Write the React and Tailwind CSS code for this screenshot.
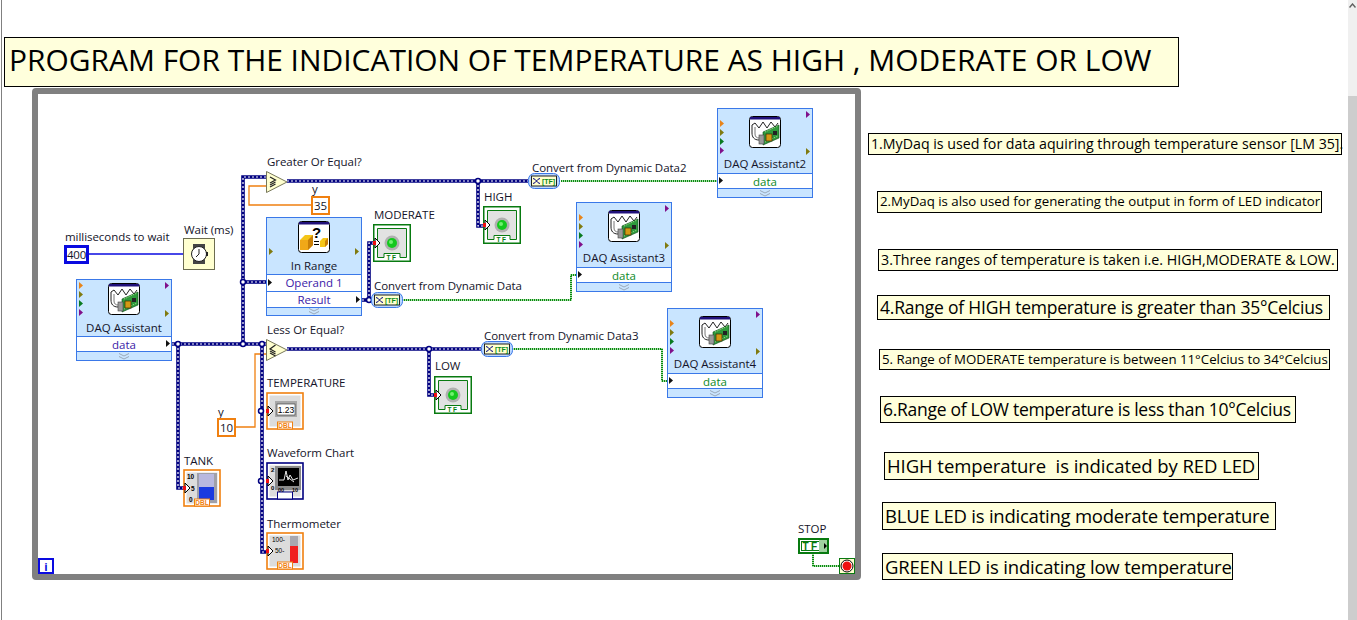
import React from "react";

const label = "absolute whitespace-nowrap text-[11.5px] tracking-[-0.05px] leading-[14px] text-[#14142a]";

function Tri({ color, className }) {
  return (
    <svg viewBox="0 0 4 7" className={`absolute w-[4px] h-[7px] ${className}`}>
      <path d="M0 0 L4 3.5 L0 7 Z" fill={color} />
    </svg>
  );
}

function Expand() {
  return (
    <svg viewBox="0 0 12 7" className="w-[12px] h-[7px]">
      <path d="M1 0.5 L6 3 L11 0.5 M1 3.5 L6 6 L11 3.5" fill="none" stroke="#9aa8b8" strokeWidth="1" />
    </svg>
  );
}

function DaqIcon() {
  return (
    <svg viewBox="0 0 32 32" className="w-8 h-8 shrink-0">
      <rect x="0.5" y="0.5" width="31" height="31" rx="3" fill="#fff" stroke="#000" />
      <rect x="1" y="1" width="30" height="2.5" fill="#20107a" />
      <path d="M10 24 C5 24 3 21 3 17 L3 9 L6 7 L10 12 L14 6 L18 12 L22 6 L26 11 L29 7" fill="none" stroke="#222" />
      <path d="M6 11 L6 18 C6 21 8 22 10 22" fill="none" stroke="#777" />
      <path d="M14 16 L30 9 L30 22 L14 29 Z" fill="#2f9a3c" stroke="#0b4a14" strokeWidth="0.6" />
      <path d="M16 16 L29 10 M16 26 L29 20" stroke="#9fe08a" strokeWidth="1" strokeDasharray="1 1" />
      <rect x="17" y="18" width="6" height="7" fill="#d49a14" stroke="#3a2a00" strokeWidth="0.7" />
      <rect x="24" y="15" width="4" height="4" fill="#222" />
      <rect x="10" y="19" width="5" height="9" fill="#9a9a9a" stroke="#444" strokeWidth="0.6" />
    </svg>
  );
}

function RangeIcon() {
  return (
    <svg viewBox="0 0 32 32" className="w-8 h-8 shrink-0">
      <rect x="0.5" y="0.5" width="31" height="31" rx="3" fill="#fff" stroke="#000" />
      <rect x="1" y="1" width="30" height="2.5" fill="#20107a" />
      <text x="14" y="17" fontSize="15" fontWeight="700" fill="#000" fontFamily="Liberation Sans, sans-serif">?</text>
      <path d="M16 20.5 H21 M16 23.5 H21" stroke="#000" />
      <path d="M2 19 L7 14 L15 14 L15 24 L10 29 L2 29 Z" fill="#f5c518" />
      <path d="M10 19 L15 14 L15 24 L10 29 Z" fill="#c97f08" />
      <path d="M2 19 L10 19 L10 29 L2 29 Z" fill="#f0a818" />
      <path d="M22 20 L25 17 L30 17 L30 23 L27 26 L22 26 Z" fill="#f5c518" />
      <path d="M27 20 L30 17 L30 23 L27 26 Z" fill="#c97f08" />
    </svg>
  );
}

function Daq({ name, dataColor, compact, inputLeft, className }) {
  return (
    <div className={`absolute w-[96px] flex flex-col border border-[#3a78e8] bg-[#c9e5ff] ${className}`}>
      <div className={`flex flex-col items-center ${compact ? "h-[56px] pt-[3px] gap-[5px]" : "h-[64px] pt-[7px] gap-[8px]"}`}>
        <DaqIcon />
        <span className="text-[11.5px] leading-[15px] text-[#14142a] whitespace-nowrap">{name}</span>
      </div>
      {compact ? (
        <>
          <Tri color="#e8841a" className="left-[2px] top-[2px]" />
          <Tri color="#807a10" className="left-[2px] top-[11px]" />
          <Tri color="#0a7a20" className="left-[2px] top-[20px]" />
          <Tri color="#80108a" className="left-[2px] top-[29px]" />
          <Tri color="#80108a" className="right-[2px] top-[2px]" />
          <Tri color="#807a10" className="right-[2px] top-[30px]" />
        </>
      ) : (
        <>
          <Tri color="#e8841a" className="left-[2px] top-[11px]" />
          <Tri color="#807a10" className="left-[2px] top-[20px]" />
          <Tri color="#0a7a20" className="left-[2px] top-[29px]" />
          <Tri color="#80108a" className="left-[2px] top-[38px]" />
          <Tri color="#80108a" className="right-[2px] top-[2px]" />
          <Tri color="#807a10" className="right-[2px] top-[39px]" />
        </>
      )}
      <div className={`relative h-[16px] border-y border-[#3a78e8] bg-white text-center text-[11.5px] leading-[15px] ${dataColor}`}>
        data
        <Tri color="#111" className={inputLeft ? "left-[1px] top-[3px]" : "right-[1px] top-[3px]"} />
      </div>
      <div className="h-[8px] flex items-center justify-center">
        <Expand />
      </div>
    </div>
  );
}

function InRange() {
  return (
    <div className="absolute left-[228px] top-[123px] w-[96px] h-[99px] flex flex-col border border-[#3a78e8] bg-[#c9e5ff]">
      <div className="h-[56px] pt-[3px] gap-[5px] flex flex-col items-center">
        <RangeIcon />
        <span className="text-[11.5px] leading-[15px] text-[#14142a]">In Range</span>
      </div>
      <Tri color="#807a10" className="left-[2px] top-[30px]" />
      <Tri color="#807a10" className="right-[2px] top-[30px]" />
      <div className="relative h-[18px] border-y border-[#3a78e8] bg-white text-center text-[11.5px] leading-[16px] text-[#3b1aa8]">
        Operand 1
        <Tri color="#111" className="left-[1px] top-[4px]" />
      </div>
      <div className="relative h-[16px] border-b border-[#3a78e8] bg-white text-center text-[11.5px] leading-[15px] text-[#3b1aa8]">
        Result
        <Tri color="#111" className="right-[1px] top-[4px]" />
      </div>
      <div className="flex-1 flex items-center justify-center">
        <Expand />
      </div>
    </div>
  );
}

function Compare({ less, className }) {
  return (
    <svg viewBox="0 0 22 22" className={`absolute w-[22px] h-[22px] ${className}`}>
      <path d="M0.5 0.5 L21 11 L0.5 21.5 Z" fill="#ffffcf" stroke="#77775a" />
      {less ? (
        <path d="M9.5 6 L4 10 L9.5 13 M4 12 L9.5 15 M4 14 L9.5 17" fill="none" stroke="#222" strokeWidth="1.2" />
      ) : (
        <path d="M4 6 L9.5 9 L4 12 M9.5 11 L4 14 M9.5 13 L4 16" fill="none" stroke="#222" strokeWidth="1.2" />
      )}
    </svg>
  );
}

function Arrow({ y }) {
  return (
    <g>
      <path d={`M2 ${y - 5} L7 ${y} L2 ${y + 5} Z`} fill="#fff" stroke="#000" strokeWidth="1" />
      <rect x="0" y={y - 2} width="3" height="4" fill="#f01010" />
    </g>
  );
}

function Led({ className }) {
  return (
    <svg viewBox="0 0 38 38" className={`absolute w-[38px] h-[38px] ${className}`}>
      <rect x="0.75" y="0.75" width="36.5" height="36.5" fill="#fff" stroke="#087a10" strokeWidth="1.5" />
      <path d="M4.5 33.5 V4.5 H33.5 V33.5 H27 V29.5 H11 V33.5 Z" fill="#e2e2e2" stroke="#087a10" />
      <circle cx="19" cy="19" r="7.5" fill="#b0b0b0" />
      <circle cx="19" cy="19" r="5" fill="#14c81e" />
      <circle cx="18" cy="18" r="2" fill="#70f070" />
      <text x="19" y="35.5" textAnchor="middle" fontSize="6.5" fontWeight="700" letterSpacing="1.5" fill="#087a10" fontFamily="Liberation Sans, sans-serif">TF</text>
      <Arrow y={19} />
    </svg>
  );
}

function Frame({ color, tab, children, className }) {
  return (
    <svg viewBox="0 0 38 38" className={`absolute w-[38px] h-[38px] ${className}`}>
      <rect x="1" y="1" width="36" height="36" fill="#fff" stroke={color} strokeWidth="1.6" />
      <path d="M3.5 3.5 H34.5 V34.5 H27 V30 H11 V34.5 H3.5 Z" fill="#dcdcdc" />
      {children}
      <rect x="11.5" y="30" width="15" height="7" fill="#fff" stroke={color} />
      <text x="19" y="36" textAnchor="middle" fontSize="6.5" fontWeight="700" fill={color} fontFamily="Liberation Sans, sans-serif">{tab}</text>
      <Arrow y={19} />
    </svg>
  );
}

function Conv({ className }) {
  return (
    <svg viewBox="0 0 32 16" className={`absolute w-[32px] h-[16px] ${className}`}>
      <rect x="0.5" y="0.5" width="31" height="15" rx="6" fill="#bcd8ff" stroke="#3a78e8" />
      <rect x="3.5" y="3" width="25" height="10" fill="#ffffcf" stroke="#222" />
      <path d="M5 5.5 C8 5.5 9 10.5 12 10.5 M5 10.5 C8 10.5 9 5.5 12 5.5" fill="none" stroke="#000080" strokeWidth="1" />
      <text x="20.5" y="11" textAnchor="middle" fontSize="7" fontWeight="700" fill="#0a8a1a" fontFamily="Liberation Sans, sans-serif">[TF]</text>
    </svg>
  );
}

const dynamicWires = [
  "M172 344 H266",
  "M178 344 V488 H183",
  "M243 344 V177 H266",
  "M243 282 H266",
  "M262 344 V552 H267",
  "M287 181 H528",
  "M478 181 V226 H484",
  "M362 300 H371",
  "M369 300 V243 H374",
  "M287 349 H481",
  "M429 349 V395 H435",
];
const dots = [
  [178, 344], [243, 344], [243, 282], [262, 344], [478, 181], [369, 300], [429, 349], [261, 411], [261, 481],
];
const greenWires = ["M561 181 H717", "M402 300 H571 V275 H576", "M512 349 H662 V381 H667", "M813 553 V566 H839"];

function Wires() {
  return (
    <svg viewBox="38 94 817 480" className="absolute left-0 top-0 w-[817px] h-[480px]" fill="none">
      <path d="M64 254 H183" stroke="#0a0ae0" strokeWidth="1.5" />
      <path d="M311 205 H249 V186 H266" stroke="#f08010" strokeWidth="1.3" />
      <path d="M235 427 H255 V354 H266" stroke="#f08010" strokeWidth="1.3" />
      {dynamicWires.map((d) => (
        <g key={d}>
          <path d={d} stroke="#000080" strokeWidth="3.6" />
          <path d={d} stroke="#fff" strokeWidth="1.2" strokeDasharray="2 2" />
        </g>
      ))}
      {dots.map(([cx, cy]) => (
        <circle key={`${cx}-${cy}`} cx={cx} cy={cy} r="2.5" fill="#fff" stroke="#000080" strokeWidth="1.5" />
      ))}
      {greenWires.map((d) => (
        <g key={d}>
          <path d={d} stroke="#a8dca8" strokeWidth="2" />
          <path d={d} stroke="#0a8a10" strokeWidth="2" strokeDasharray="1 1" />
        </g>
      ))}
    </svg>
  );
}

function Diagram() {
  return (
    <div className="relative w-[829px] h-[492px] ml-[30px] border-[6px] border-[#808080] rounded-[4px] bg-white shrink-0">
      <Wires />

      <span className={`${label} left-[27px] top-[136px]`}>milliseconds to wait</span>
      <span className={`${label} left-[146px] top-[129px]`}>Wait (ms)</span>
      <span className={`${label} left-[229px] top-[61px]`}>Greater Or Equal?</span>
      <span className={`${label} left-[229px] top-[229px]`}>Less Or Equal?</span>
      <span className={`${label} left-[274px] top-[88px]`}>y</span>
      <span className={`${label} left-[180px] top-[311px]`}>y</span>
      <span className={`${label} left-[336px] top-[114px]`}>MODERATE</span>
      <span className={`${label} left-[446px] top-[96px]`}>HIGH</span>
      <span className={`${label} left-[397px] top-[265px]`}>LOW</span>
      <span className={`${label} left-[336px] top-[185px]`}>Convert from Dynamic Data</span>
      <span className={`${label} left-[494px] top-[67px]`}>Convert from Dynamic Data2</span>
      <span className={`${label} left-[446px] top-[235px]`}>Convert from Dynamic Data3</span>
      <span className={`${label} left-[229px] top-[282px]`}>TEMPERATURE</span>
      <span className={`${label} left-[229px] top-[352px]`}>Waveform Chart</span>
      <span className={`${label} left-[229px] top-[423px]`}>Thermometer</span>
      <span className={`${label} left-[146px] top-[360px]`}>TANK</span>
      <span className={`${label} left-[760px] top-[428px]`}>STOP</span>

      <div className="absolute left-[26px] top-[151px] w-[25px] h-[19px] border-[3px] border-[#0a0ae0] bg-white flex items-center justify-center text-[11.5px] tracking-[-0.3px] leading-none text-[#14142a]">400</div>
      <div className="absolute left-[273px] top-[102px] w-[19px] h-[19px] border-[2px] border-[#f08010] bg-white flex items-center justify-center text-[11.5px] leading-none text-[#14142a]">35</div>
      <div className="absolute left-[179px] top-[324px] w-[19px] h-[19px] border-[2px] border-[#f08010] bg-white flex items-center justify-center text-[11.5px] leading-none text-[#14142a]">10</div>

      <svg viewBox="0 0 32 32" className="absolute left-[145px] top-[144px] w-8 h-8">
        <rect x="0.5" y="0.5" width="31" height="31" fill="#ffffd0" stroke="#6c6c50" />
        <rect x="10" y="6" width="12" height="20" fill="#444" />
        <circle cx="16" cy="16" r="7.5" fill="#fff" stroke="#222" />
        <rect x="23" y="14" width="2" height="4" fill="#222" />
        <path d="M16 11 V16 M13 19 L16 16" stroke="#222" strokeWidth="1" />
      </svg>

      <Daq name="DAQ Assistant" compact dataColor="text-[#3b1aa8]" className="left-[38px] top-[185px] h-[82px]" />
      <Daq name="DAQ Assistant2" inputLeft dataColor="text-[#0d8a28]" className="left-[679px] top-[14px] h-[90px]" />
      <Daq name="DAQ Assistant3" inputLeft dataColor="text-[#0d8a28]" className="left-[538px] top-[108px] h-[90px]" />
      <Daq name="DAQ Assistant4" inputLeft dataColor="text-[#0d8a28]" className="left-[629px] top-[214px] h-[90px]" />
      <InRange />

      <Compare className="left-[228px] top-[77px]" />
      <Compare less className="left-[228px] top-[245px]" />

      <Led className="left-[335px] top-[130px]" />
      <Led className="left-[445px] top-[112px]" />
      <Led className="left-[396px] top-[282px]" />

      <Conv className="left-[333px] top-[198px]" />
      <Conv className="left-[490px] top-[79px]" />
      <Conv className="left-[443px] top-[247px]" />

      <Frame color="#f08010" tab="DBL" className="left-[228px] top-[298px]">
        <rect x="9" y="9" width="22" height="16" fill="#a8a8a8" />
        <rect x="11" y="12" width="18" height="11" fill="#fff" stroke="#333" strokeWidth="0.6" />
        <text x="20" y="21" textAnchor="middle" fontSize="8.5" fill="#000" fontFamily="Liberation Sans, sans-serif">1.23</text>
      </Frame>

      <Frame color="#000080" tab="" className="left-[228px] top-[368px]">
        <rect x="9" y="4" width="26" height="24" fill="#8a8a8a" />
        <rect x="12" y="6" width="21" height="18" fill="#000" />
        <path d="M13 18 H18 L20 9 L22 18 L24 13 L27 18 L32 16 M20 14 L28 20" fill="none" stroke="#fff" strokeWidth="0.9" />
        <text x="5" y="10" fontSize="6" fontWeight="700" fill="#000" fontFamily="Liberation Sans, sans-serif">2</text>
        <text x="5" y="28" fontSize="6" fontWeight="700" fill="#000" fontFamily="Liberation Sans, sans-serif">0</text>
        <text x="12" y="30" fontSize="5.5" fontWeight="700" fill="#000" fontFamily="Liberation Sans, sans-serif">00</text>
        <text x="26" y="30" fontSize="5.5" fontWeight="700" fill="#000" fontFamily="Liberation Sans, sans-serif">10</text>
      </Frame>

      <Frame color="#f08010" tab="DBL" className="left-[228px] top-[438px]">
        <rect x="24" y="4" width="8" height="27" fill="#a8a8b0" />
        <rect x="24" y="14" width="8" height="17" fill="#f02020" />
        <text x="6" y="10" fontSize="6.5" fill="#000" fontFamily="Liberation Sans, sans-serif">100-</text>
        <text x="9" y="21" fontSize="6.5" fill="#000" fontFamily="Liberation Sans, sans-serif">50-</text>
      </Frame>

      <Frame color="#f08010" tab="DBL" className="left-[145px] top-[375px]">
        <rect x="14" y="4" width="20" height="30" fill="#a0a0a8" />
        <rect x="16" y="5" width="15" height="13" fill="#b8b8e0" />
        <rect x="16" y="18" width="15" height="13" fill="#1a3ae0" />
        <text x="4" y="10" fontSize="6.5" fontWeight="700" fill="#000" fontFamily="Liberation Sans, sans-serif">10</text>
        <text x="8" y="22" fontSize="6.5" fontWeight="700" fill="#000" fontFamily="Liberation Sans, sans-serif">5</text>
        <text x="6" y="33" fontSize="6.5" fontWeight="700" fill="#000" fontFamily="Liberation Sans, sans-serif">0</text>
      </Frame>

      <div className="absolute left-0 top-[464px] w-[16px] h-[16px] border-2 border-[#0a0ae0] bg-white flex items-center justify-center text-[11px] leading-none font-bold text-[#0a0ae0]">i</div>

      <svg viewBox="0 0 31 16" className="absolute left-[760px] top-[444px] w-[31px] h-[16px]">
        <rect x="1" y="1" width="29" height="14" fill="#fff" stroke="#087a10" strokeWidth="2" />
        <rect x="3.5" y="3.5" width="24" height="9" fill="#fff" stroke="#087a10" />
        <rect x="21" y="2" width="8" height="12" fill="#a0d0a0" />
        <text x="13" y="12" textAnchor="middle" fontSize="10" fontWeight="700" letterSpacing="2.5" fill="#087a10" fontFamily="Liberation Sans, sans-serif">TF</text>
        <path d="M26 5 L29 8 L26 11 Z" fill="#000" />
      </svg>

      <svg viewBox="0 0 16 16" className="absolute left-[801px] top-[464px] w-4 h-4">
        <rect x="0.5" y="0.5" width="15" height="15" fill="#ffffd0" stroke="#087a10" />
        <circle cx="8" cy="8" r="6" fill="#fff" stroke="#000" />
        <circle cx="8" cy="8" r="4.5" fill="#f01010" />
      </svg>
    </div>
  );
}

const notes = [
  { text: "1.MyDaq is used for data aquiring through temperature sensor [LM 35].", box: "mt-[45px] ml-[7px] w-[474px] h-[22px] text-[14.2px]" },
  { text: "2.MyDaq is also used for generating the output in form of LED indicator", box: "mt-[36px] ml-[16px] w-[445px] h-[22px] text-[13.27px]" },
  { text: "3.Three ranges of temperature is taken i.e. HIGH,MODERATE & LOW.", box: "mt-[36px] ml-[17px] w-[460px] h-[22px] text-[14.25px]" },
  { text: "4.Range of HIGH temperature is greater than 35°Celcius", box: "mt-[24px] ml-[16px] w-[453px] h-[25px] text-[17.5px] tracking-[-0.22px]" },
  { text: "5. Range of MODERATE temperature is between 11°Celcius to 34°Celcius", box: "mt-[29px] ml-[18px] w-[451px] h-[21px] text-[13.25px]" },
  { text: "6.Range of LOW temperature is less than 10°Celcius", box: "mt-[26px] ml-[19px] w-[416px] h-[27px] text-[17.5px] tracking-[-0.28px]" },
  { text: "HIGH temperature  is indicated by RED LED", box: "mt-[29px] ml-[23px] w-[375px] h-[28px] text-[18.5px] tracking-[-0.07px]" },
  { text: "BLUE LED is indicating moderate temperature", box: "mt-[22px] ml-[21px] w-[394px] h-[28px] text-[18.5px] tracking-[-0.23px]" },
  { text: "GREEN LED is indicating low temperature", box: "mt-[23px] ml-[21px] w-[351px] h-[27px] text-[18.5px] tracking-[-0.18px]" },
];

export default function App() {
  return (
    <div className="flex w-[1357px] h-[620px] overflow-hidden bg-white font-['Open_Sans',sans-serif]">
      <div className="ml-px w-px bg-[#808080] shrink-0" />
      <main className="w-[1346px] shrink-0">
        <h1 className="ml-[2px] mt-[37px] w-[1175px] h-[50px] border border-black bg-[#ffffdc] pl-[4px] pb-[4px] flex items-center text-[29.95px] font-normal text-black whitespace-nowrap">
          PROGRAM FOR THE INDICATION OF TEMPERATURE AS HIGH , MODERATE OR LOW
        </h1>
        <div className="flex mt-[1px]">
          <Diagram />
          <div className="flex flex-col items-start">
            {notes.map((n) => (
              <div key={n.text} className={`flex items-center border border-black bg-[#ffffdc] pl-[2px] whitespace-pre text-black ${n.box}`}>
                {n.text}
              </div>
            ))}
          </div>
        </div>
      </main>
      <aside className="w-[9px] shrink-0 flex flex-col bg-[#f0f0f0]">
        <div className="h-[96px] flex justify-center pt-[3px]">
          <svg viewBox="0 0 7 5" className="w-[7px] h-[5px]">
            <path d="M0.5 4.5 L3.5 1 L6.5 4.5" fill="none" stroke="#606060" strokeWidth="1.4" />
          </svg>
        </div>
        <div className="flex-1 bg-[#cdcdcd]" />
      </aside>
    </div>
  );
}
